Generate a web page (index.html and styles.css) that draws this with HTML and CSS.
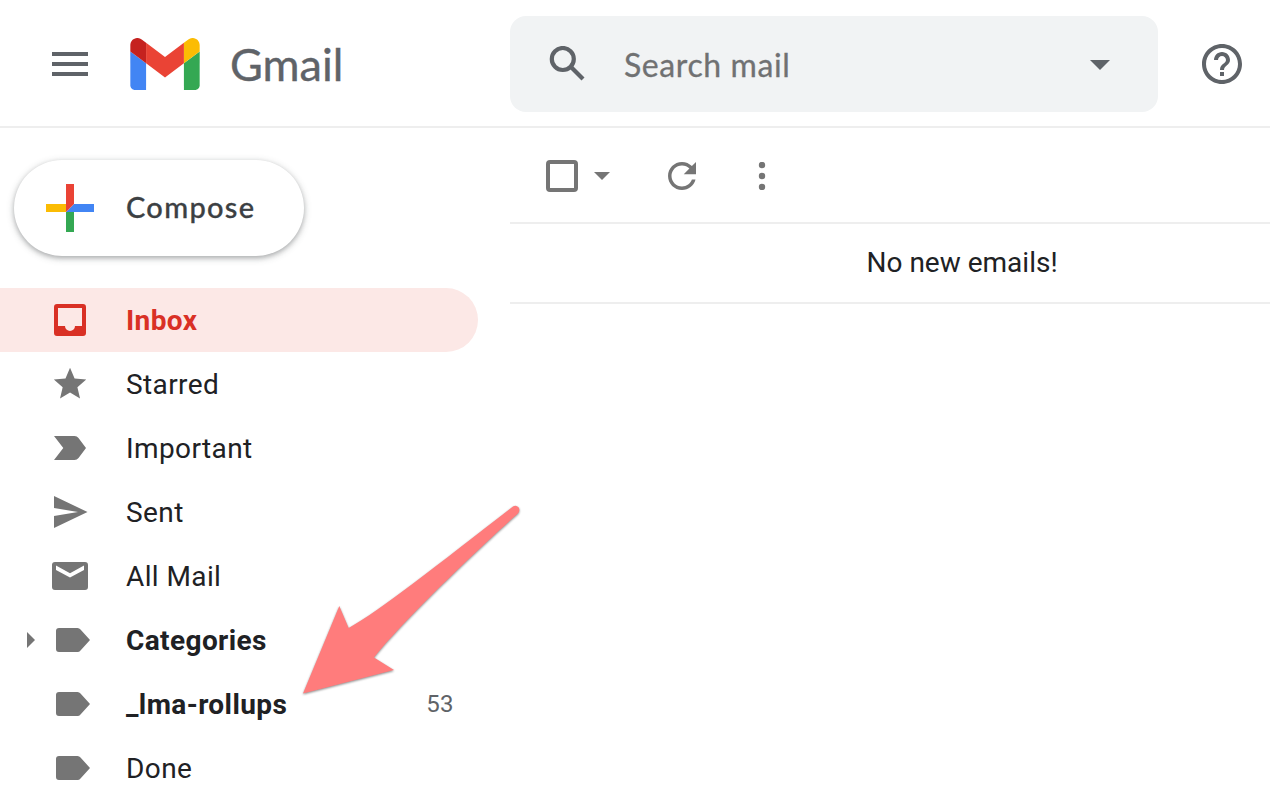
FILE: index.html
```html
<!DOCTYPE html>
<html lang="en">
<head>
<meta charset="utf-8">
<title>Gmail</title>
<link rel="stylesheet" href="styles.css">
</head>
<body>
<svg class="defs" width="0" height="0" aria-hidden="true">
  <symbol id="label" viewBox="0 0 40 40"><path d="M9 8h18.500q1.900 0 3 1.500L40 20l-9.500 10.500q-1.100 1.500-3 1.500H9q-3 0-3-3V11q0-3 3-3z"/></symbol>
</svg>
<div class="app">
  <header class="header">
    <svg class="menu" viewBox="0 0 36 24"><path d="M0 0h36v4H0zM0 10h36v4H0zM0 20h36v4H0z"/></svg>
    <svg class="logo" viewBox="52 42 88 66">
      <path fill="#4285f4" d="M58 108h14V74L52 59v43c0 3.320 2.690 6 6 6"/>
      <path fill="#34a853" d="M120 108h14c3.320 0 6-2.690 6-6V59l-20 15"/>
      <path fill="#fbbc04" d="M120 48v26l20-15v-8c0-7.420-8.470-11.650-14.400-7.200"/>
      <path fill="#ea4335" d="M72 74V48l24 18 24-18v26L96 92"/>
      <path fill="#c5221f" d="M52 51v8l20 15V48l-5.600-4.200c-5.940-4.450-14.400-.22-14.400 7.200"/>
    </svg>
    <span class="wordmark">Gmail</span>
    <div class="search">
      <svg class="glass" viewBox="0 0 36 36"><circle cx="13.800" cy="13" r="11"/><path d="M21.500 20.500 34 33"/></svg>
      <span class="placeholder">Search mail</span>
      <svg class="caret" viewBox="0 0 20 10"><path d="M0 0h20L10 10z"/></svg>
    </div>
    <svg class="help" viewBox="2 2 20 20"><path d="M11 18h2v-2h-2v2zm1-16C6.480 2 2 6.480 2 12s4.480 10 10 10 10-4.480 10-10S17.520 2 12 2zm0 18c-4.410 0-8-3.590-8-8s3.590-8 8-8 8 3.590 8 8-3.590 8-8 8zm0-14c-2.210 0-4 1.790-4 4h2c0-1.100.9-2 2-2s2 .9 2 2c0 2-3 1.750-3 5h2c0-2.250 3-2.500 3-5 0-2.210-1.790-4-4-4z"/></svg>
  </header>
  <div class="body">
    <aside class="sidebar">
      <button class="compose">
        <svg class="plus" viewBox="0 0 48 48">
          <path fill="#fbbc04" d="M0 20h20v8H0z"/><path fill="#34a853" d="M20 28h8v20h-8z"/>
          <path fill="#4285f4" d="M28 20h20v8H20z"/><path fill="#ea4335" d="M20 0h8v20l-8 8z"/>
        </svg>
        <span class="compose-text">Compose</span>
      </button>
      <nav class="nav">
        <a class="item active"><svg class="icon" viewBox="0 0 40 40"><path fill-rule="evenodd" d="M7 4h26q3 0 3 3v26q0 3-3 3H7q-3 0-3-3V7q0-3 3-3zM8 8v18h7a5 5 0 0 0 10 0h7V8z"/></svg><span class="name">Inbox</span></a>
        <a class="item"><svg class="icon" viewBox="0 0 40 40"><path transform="translate(.6 .6) scale(1.620)" d="M12 17.270 18.180 21l-1.640-7.030L22 9.240l-7.190-.61L12 2 9.190 8.630 2 9.240l5.460 4.730L5.820 21z"/></svg><span class="name">Starred</span></a>
        <a class="item"><svg class="icon" viewBox="0 0 40 40"><path d="M4 8h20.500q2.500 0 4 2L36 20l-7.500 10q-1.500 2-4 2H4l9.300-12z"/></svg><span class="name">Important</span></a>
        <a class="item"><svg class="icon" viewBox="0 0 40 40"><path d="M4 4 37.500 20 4 36V24l24-4-24-4z"/></svg><span class="name">Sent</span></a>
        <a class="item"><svg class="icon" viewBox="0 0 40 40"><path fill-rule="evenodd" d="M5 6h30q3 0 3 3v22q0 3-3 3H5q-3 0-3-3V9q0-3 3-3zM6 9.500V14l14 7.600L34 14V9.500l-14 7.800z"/></svg><span class="name">All Mail</span></a>
        <a class="item bold parent"><svg class="expand" viewBox="0 0 8 16"><path d="M0 0l8 8-8 8z"/></svg><svg class="icon"><use href="#label"/></svg><span class="name">Categories</span></a>
        <a class="item bold"><svg class="icon"><use href="#label"/></svg><span class="name">_lma-rollups</span><span class="count">53</span></a>
        <a class="item"><svg class="icon"><use href="#label"/></svg><span class="name">Done</span></a>
      </nav>
    </aside>
    <main class="main">
      <div class="toolbar">
        <span class="checkbox"></span>
        <svg class="select-caret" viewBox="0 0 16 8"><path d="M0 0h16L8 8z"/></svg>
        <svg class="refresh" viewBox="4 4 16 16"><path d="M17.650 6.350C16.200 4.900 14.210 4 12 4c-4.420 0-7.990 3.580-7.990 8s3.570 8 7.990 8c3.730 0 6.840-2.550 7.730-6h-2.080c-.82 2.330-3.040 4-5.650 4-3.310 0-6-2.690-6-6s2.690-6 6-6c1.660 0 3.140.69 4.220 1.780L13 11h7V4l-2.350 2.350z"/></svg>
        <svg class="more" viewBox="0 0 8 28"><circle cx="4" cy="3" r="3.200"/><circle cx="4" cy="14" r="3.200"/><circle cx="4" cy="25" r="3.200"/></svg>
      </div>
      <div class="empty">No new emails!</div>
    </main>
  </div>
  <svg class="arrow" viewBox="290 490 250 220"><path d="M303 693.500 339.300 606 348.700 628C381 610 436 566 513 506.500Q516 504.500 518.500 507.300 520.500 510.300 518 513.500C475 552 403 621 374 657.500L394 670z"/></svg>
</div>
</body>
</html>
```
FILE: styles.css
```css
* { box-sizing: border-box; }
body { margin: 0; background: #fff; font-family: Roboto, "Liberation Sans", sans-serif; color: #202124; }
svg { display: block; flex: none; }
.defs { position: absolute; }
.app { position: relative; width: 1270px; height: 808px; overflow: hidden; }
.header { display: flex; align-items: center; height: 128px; padding-left: 52px; border-bottom: 2px solid #eee; fill: #5f6368; }
.menu { width: 36px; height: 24px; margin: 2px 41.5px 0 0; }
.logo { width: 70px; height: 52px; margin-top: 2px; }
.wordmark { width: 280px; margin-left: 30.5px; padding-top: 1px; font: 45px/56px Lato, sans-serif; color: #5f6368; -webkit-text-stroke: .4px #5f6368; white-space: nowrap; }
.search { display: flex; align-items: center; flex: none; width: 648px; height: 96px; margin-top: 2px; padding: 0 48px 0 39px; border-radius: 16px; background: #f1f3f4; }
.glass { width: 36px; height: 36px; fill: none; stroke: #5f6368; stroke-width: 4.2; }
.placeholder { flex: 1; padding: 1px 0 0 39px; font: 32px/40px Lato, sans-serif; letter-spacing: .6px; color: #707172; -webkit-text-stroke: .3px #707172; }
.caret { width: 20px; height: 10px; margin-top: 2px; }
.help { width: 40px; height: 40px; margin: 2px 0 0 44px; }
.body { display: flex; height: 680px; }
.sidebar { width: 510px; flex: none; padding-top: 32px; }
.compose { display: flex; align-items: center; width: 290px; height: 96px; margin: 0 0 32px 14px; padding: 0 0 0 32px; border: 0; border-radius: 48px; background: #fff; box-shadow: 0 2px 4px rgba(60,64,67,.302), 0 2px 6px 2px rgba(60,64,67,.149); }
.plus { width: 48px; height: 48px; }
.compose-text { margin: -2px 0 0 32px; font: 500 29px/36px Lato, sans-serif; letter-spacing: 1.3px; color: #3c4043; -webkit-text-stroke: .3px #3c4043; }
.item { display: flex; align-items: center; width: 478px; height: 64px; padding: 0 24px 0 50px; border-radius: 0 32px 32px 0; font-size: 28px; line-height: 40px; letter-spacing: .4px; }
.icon { width: 40px; height: 40px; margin-right: 36px; fill: #757575; }
.name { padding-top: 2px; }
.bold { font-weight: 700; }
.active { background: #fce8e6; color: #d93025; font-weight: 700; }
.active .icon { fill: #d93025; }
.parent { padding-left: 26.5px; }
.expand { width: 8px; height: 16px; margin-right: 15.5px; fill: #757575; }
.count { margin-left: auto; font-size: 24px; font-weight: 400; color: #5f6368; }
.main { flex: 1; }
.toolbar { display: flex; align-items: center; height: 96px; padding-left: 36px; border-bottom: 2px solid #eee; fill: #757575; }
.toolbar > * { margin-top: 2px; }
.checkbox { width: 32px; height: 32px; border: 4px solid #757575; border-radius: 4px; }
.select-caret { width: 16px; height: 8px; margin-left: 16px; }
.refresh { width: 28px; height: 28px; margin-left: 58px; }
.more { width: 8px; height: 28px; margin-left: 62px; }
.empty { height: 80px; padding-left: 356.5px; border-bottom: 2px solid #eee; font-size: 28px; line-height: 78px; white-space: nowrap; }
.arrow { position: absolute; left: 290px; top: 490px; width: 250px; height: 220px; fill: #ff7c7c; filter: drop-shadow(0 1px 1px rgba(0,0,0,.45)); }
```
